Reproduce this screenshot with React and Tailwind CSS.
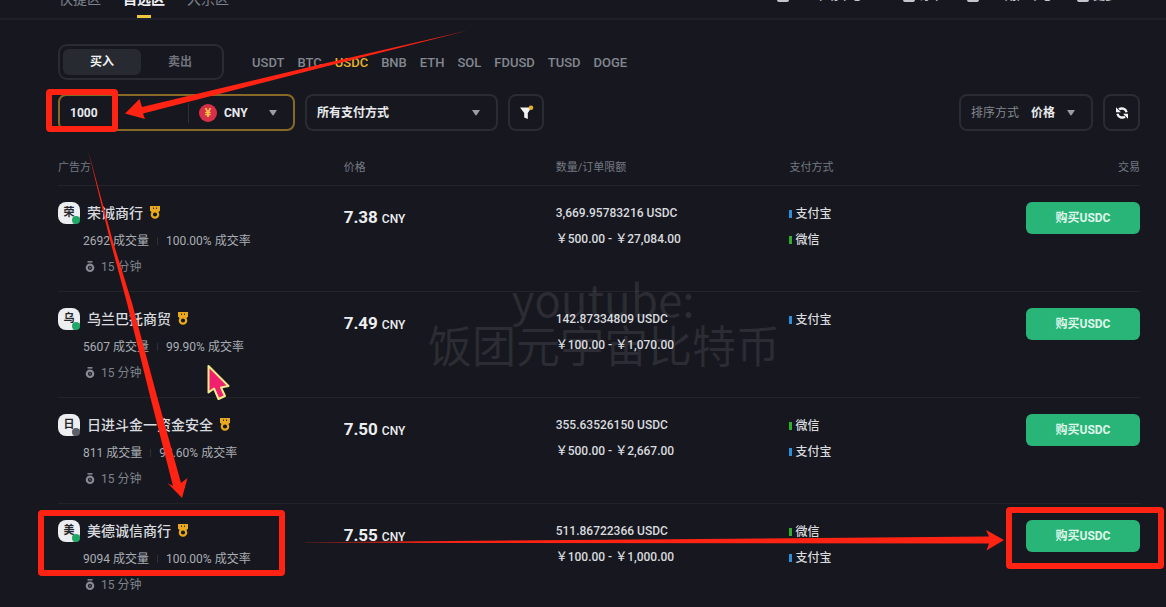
import React, { useState } from 'react';

const navTabs = ['快捷区', '自选区', '大宗区'];
const navLinks = ['P2P帮助中心', '订单', 'P2P用户中心', '更多'];
const coins = ['USDT', 'BTC', 'USDC', 'BNB', 'ETH', 'SOL', 'FDUSD', 'TUSD', 'DOGE'];

const ads = [
  {
    name: '荣诚商行',
    orders: '2692',
    rate: '100.00%',
    price: '7.38',
    amount: '3,669.95783216',
    limit: '\uFFE5500.00 - \uFFE527,084.00',
    pays: ['支付宝', '微信'],
    online: true,
  },
  {
    name: '乌兰巴托商贸',
    orders: '5607',
    rate: '99.90%',
    price: '7.49',
    amount: '142.87334809',
    limit: '\uFFE5100.00 - \uFFE51,070.00',
    pays: ['支付宝'],
    online: true,
  },
  {
    name: '日进斗金一资金安全',
    orders: '811',
    rate: '98.60%',
    price: '7.50',
    amount: '355.63526150',
    limit: '\uFFE5500.00 - \uFFE52,667.00',
    pays: ['微信', '支付宝'],
    online: false,
  },
  {
    name: '美德诚信商行',
    orders: '9094',
    rate: '100.00%',
    price: '7.55',
    amount: '511.86722366',
    limit: '\uFFE5100.00 - \uFFE51,000.00',
    pays: ['微信', '支付宝'],
    online: true,
  },
];

const Caret = () => (
  <svg className="w-2 h-2 shrink-0 pointer-events-none" viewBox="0 0 8 8" fill="#9a9ea5">
    <path d="M0 1h8L4.700 6a0.900 0.900 0 0 1-1.400 0z" />
  </svg>
);

const Medal = () => (
  <svg className="w-3 h-4 shrink-0" viewBox="0 0 12 16" fill="none">
    <path d="M1 1h10v4.500L8.500 8h-5L1 5.500z" fill="#eaa91b" />
    <path d="M4 3.200h1M7 3.200h1" stroke="#3a2e14" strokeWidth="1.600" />
    <circle cx="6" cy="9.500" r="3.200" fill="#17181e" stroke="#eaa91b" strokeWidth="2.200" />
  </svg>
);

const Stopwatch = () => (
  <svg className="w-3 h-3 shrink-0" viewBox="0 0 12 12" fill="none" stroke="#858a93">
    <path d="M3.500 0.800h5" strokeWidth="1.500" />
    <circle cx="6" cy="6.800" r="3.200" strokeWidth="2.200" />
    <path d="M6 5.800v1.600" strokeWidth="1.200" />
  </svg>
);

const FilterIcon = () => (
  <svg className="w-4 h-4" viewBox="0 0 16 16">
    <path d="M2 2.500h11.500L9.800 8v6L6.200 12.500V8z" fill="#f2f3f5" />
    <circle cx="13" cy="2.800" r="2.300" fill="#e9ae2d" />
  </svg>
);

const RefreshIcon = () => (
  <svg className="w-4 h-4" viewBox="0 0 16 16" fill="none">
    <path d="M5 4.300C7.500 2.600 11.600 3.400 12.600 7.200" stroke="#f2f3f5" strokeWidth="2.400" />
    <path d="M11 11.700C8.500 13.400 4.400 12.600 3.400 8.800" stroke="#f2f3f5" strokeWidth="2.400" />
    <path d="M2 2.200v5h5zM14 13.800v-5H9z" fill="#f2f3f5" />
  </svg>
);

function Advertiser({ ad }) {
  return (
    <>
      <div className="flex items-center h-[22px]">
        <span className="relative w-[22px] h-[22px] rounded-lg bg-[#eceef0] text-[#24262c] text-[11px] font-bold leading-[22px] text-center shrink-0">
          {ad.name[0]}
          <i
            className={`absolute right-0 bottom-0 w-2 h-2 rounded-full ${ad.online ? 'bg-[#20a866]' : 'bg-[#5c6068]'}`}
          />
        </span>
        <a href="#ad" className="ml-[7px] mr-[6px] text-sm font-medium text-[#d9dbdf]">{ad.name}</a>
        <Medal />
      </div>
      <div className="flex items-center h-[18px] mt-2 pl-[25px] text-xs text-[#a9adb4]">
        <span>{ad.orders} 成交量</span>
        <span className="w-px h-2 bg-[#2c2f36] mx-2" />
        <span>{ad.rate} 成交率</span>
      </div>
      <div className="flex items-center h-[18px] mt-2 pl-[26px] gap-[5px] text-xs text-[#7d828b]">
        <Stopwatch />
        <span>15 分钟</span>
      </div>
    </>
  );
}

// Marks over the page: boxes, arrows and the pointer
function Annotations() {
  return (
    <svg className="absolute top-0 left-0 w-[1166px] h-[607px] pointer-events-none" viewBox="0 0 1166 607">
      <defs>
        <linearGradient id="fadeLine" x1="300" x2="420" y1="0" y2="0" gradientUnits="userSpaceOnUse">
          <stop offset="0" stopColor="#ff2314" stopOpacity="0.3" />
          <stop offset="1" stopColor="#ff2314" />
        </linearGradient>
      </defs>
      <g fill="none" stroke="#ff2314" strokeWidth="6" strokeLinejoin="round">
        <rect x="49" y="92" width="66" height="37" rx="1" />
        <rect x="41" y="513" width="241" height="60" rx="1" />
        <rect x="1009" y="510" width="152" height="56" rx="1" />
      </g>
      <g fill="#ff2314">
        <path d="M468 30.500L320 64.500L142 107L139.500 99L125 113.500L145 119L143 113.500L320 68z" />
        <path d="M88 150L110 240L127 303L151 400L173 486L167.500 483L182 498L187.500 478L181 483L158 400L132 303L112.500 240z" />
        <path d="M305 542.200L989 536.500L986 530L1004 540L986.500 550.500L989 543.500L305 542.800z" fill="url(#fadeLine)" />
      </g>
      <path
        d="M208.500 366V392.500L214 388.500L218.500 399L225 396L221 387.500L228.500 386z"
        fill="#f0206f"
        stroke="#f4e98c"
        strokeWidth="2"
        strokeLinejoin="round"
      />
    </svg>
  );
}

const App = () => {
  const [side, setSide] = useState('buy');
  const [coin, setCoin] = useState('USDC');
  const [amount, setAmount] = useState('1000');

  const sideClass = (active) =>
    `flex-1 rounded-md text-xs font-bold cursor-pointer ${active ? 'bg-[#272a31] text-[#f0f1f3]' : 'text-[#6f737b]'}`;

  return (
    <div className="relative min-h-screen overflow-hidden bg-[#17181f] font-[Roboto,'Noto_Sans_CJK_SC',sans-serif] text-[#d9dbdf]">
      <header className="relative h-5 border-b-2 border-[#1f2126] overflow-hidden">
        <div className="flex justify-between pl-[59px] pr-[49px] -mt-[11px] leading-5">
          <nav className="flex gap-[22px] text-sm font-bold">
            {navTabs.map((tab) => (
              <a
                key={tab}
                href="#zone"
                className={`flex flex-col items-center ${tab === '自选区' ? 'text-[#f0f1f3]' : 'font-normal text-[#7d828b]'}`}
              >
                {tab}
                {tab === '自选区' && <span className="w-[14px] h-[3px] mt-[6px] bg-[#efc63f]" />}
              </a>
            ))}
          </nav>
          <nav className="flex gap-6 text-xs font-medium text-[#c3c6cb]">
            {navLinks.map((link) => (
              <a key={link} href="#link" className="flex items-center h-[14px] gap-1 first:mr-4">
                <span className="w-3 h-3 border-2 border-[#c3c6cb] rounded-xs" />
                {link}
              </a>
            ))}
          </nav>
        </div>
      </header>

      <main className="relative pl-[58px] pr-[26px] pt-6">
        <div className="flex items-center">
          <div className="flex w-[166px] h-9 p-[3px] border-2 border-[#292c32] rounded-[9px]">
            <button type="button" className={sideClass(side === 'buy')} onClick={() => setSide('buy')}>买入</button>
            <button type="button" className={sideClass(side === 'sell')} onClick={() => setSide('sell')}>卖出</button>
          </div>
          <div className="flex gap-[13px] ml-7 pt-[2px] text-[13px] font-medium">
            {coins.map((c) => (
              <button
                key={c}
                type="button"
                onClick={() => setCoin(c)}
                className={`cursor-pointer ${c === coin ? 'text-[#e2b42c]' : 'text-[#83878f]'}`}
              >
                {c}
              </button>
            ))}
          </div>
        </div>

        <div className="flex items-center mt-[14px] text-xs font-bold text-[#e8eaed]">
          <div className="flex items-center w-[237px] h-[37px] border-2 border-[#876827] rounded-lg">
            <input
              aria-label="金额"
              value={amount}
              onChange={(e) => setAmount(e.target.value)}
              className="w-[128px] pl-[10px] outline-none"
            />
            <span className="w-px h-5 bg-[#2c2f36]" />
            <span className="w-[18px] h-[18px] ml-[10px] rounded-full bg-[#d92f49] text-[#f5c344] leading-[18px] text-center">¥</span>
            <div className="relative flex items-center flex-1">
              <select aria-label="币种" className="appearance-none w-full pl-[7px] outline-none" defaultValue="CNY">
                <option>CNY</option>
              </select>
              <span className="absolute right-4"><Caret /></span>
            </div>
          </div>
          <div className="relative flex items-center ml-[10px] w-[193px] h-[37px] border-2 border-[#292c32] rounded-lg">
            <select aria-label="支付方式" className="appearance-none w-full h-full pl-[10px] outline-none">
              <option>所有支付方式</option>
            </select>
            <span className="absolute right-4"><Caret /></span>
          </div>
          <button type="button" aria-label="筛选" className="flex items-center justify-center ml-[10px] w-9 h-[37px] border-2 border-[#292c32] rounded-lg cursor-pointer">
            <FilterIcon />
          </button>
          <div className="relative flex items-center ml-auto w-[134px] h-[37px] border-2 border-[#292c32] rounded-lg">
            <label htmlFor="sort" className="pl-[10px] font-normal text-[#83878f] whitespace-nowrap">排序方式</label>
            <select id="sort" className="appearance-none flex-1 min-w-0 h-full pl-3 outline-none">
              <option>价格</option>
            </select>
            <span className="absolute right-4"><Caret /></span>
          </div>
          <button type="button" aria-label="刷新" className="flex items-center justify-center ml-[10px] w-[37px] h-[37px] border-2 border-[#292c32] rounded-lg cursor-pointer">
            <RefreshIcon />
          </button>
        </div>

        <table className="w-full mt-[27px] table-fixed text-left">
          <colgroup>
            <col className="w-[26.4%]" />
            <col className="w-[19.6%]" />
            <col className="w-[21.6%]" />
            <col className="w-[16%]" />
            <col />
          </colgroup>
          <thead>
            <tr className="h-[27px] align-top text-[11px] leading-5 text-[#747982]">
              <th className="font-normal">广告方</th>
              <th className="font-normal">价格</th>
              <th className="font-normal">数量/订单限额</th>
              <th className="font-normal">支付方式</th>
              <th className="font-normal text-right">交易</th>
            </tr>
          </thead>
          <tbody>
            {ads.map((ad) => (
              <tr key={ad.name} className="h-[106px] align-top border-t border-[#222429]">
                <td className="pt-4"><Advertiser ad={ad} /></td>
                <td className="pt-[19px] leading-6 font-medium text-[#eceef0]">
                  <span className="text-[17px] font-bold">{ad.price}</span> <span className="text-xs">CNY</span>
                </td>
                <td className="pt-[14px] text-xs leading-[26px] font-medium">
                  <div>{ad.amount} USDC</div>
                  <div>{ad.limit}</div>
                </td>
                <td className="pt-[15px] text-xs leading-[26px] font-medium">
                  {ad.pays.map((pay) => (
                    <div key={pay} className="flex items-center gap-[3px]">
                      <span className={`w-[3px] h-2 ${pay === '微信' ? 'bg-[#2fae2c]' : 'bg-[#2b8fdd]'}`} />
                      {pay}
                    </div>
                  ))}
                </td>
                <td className="pt-4 text-right">
                  <button type="button" className="w-[114px] h-8 rounded-md bg-[#2ab578] text-xs font-bold text-[#dff5ea] cursor-pointer">
                    购买USDC
                  </button>
                </td>
              </tr>
            ))}
          </tbody>
        </table>
      </main>

      <div className="absolute top-[275px] left-[428px] w-[350px] text-center text-[44px] leading-[46px] text-white/9 pointer-events-none font-['Noto_Sans_CJK_SC',sans-serif] whitespace-nowrap">
        <p>youtube:</p>
        <p>饭团元宇宙比特币</p>
      </div>
      <Annotations />
    </div>
  );
};

export default App;
